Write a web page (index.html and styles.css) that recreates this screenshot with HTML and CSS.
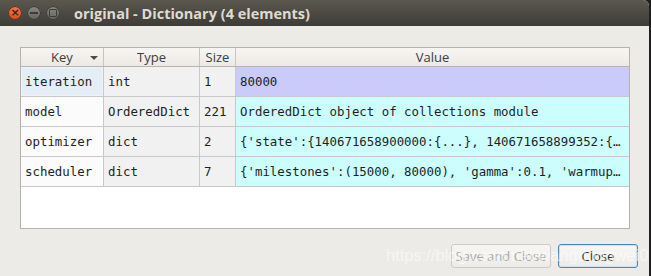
FILE: index.html
```
<!doctype html>
<html lang="en-US">
    <head>
        <meta charset="utf-8"/>
        <title>original - Dictionary (4 elements)</title>
        <link rel="stylesheet" href="styles.css">
    </head>
    <body>
        <div class="window">
            <div class="titlebar">
                <div class="controls">
                    <span class="btn close">&#215;</span>
                    <span class="btn minimize"><i class="bar"></i></span>
                    <span class="btn maximize"><i class="box"></i></span>
                </div>
                <div class="title">original - Dictionary (4 elements)</div>
            </div>
            <div class="content">
                <div class="grid">
                    <table>
                        <thead>
                            <tr>
                                <th class="col-key">Key<span class="sort"></span></th>
                                <th class="col-type">Type</th>
                                <th class="col-size">Size</th>
                                <th class="col-value">Value</th>
                            </tr>
                        </thead>
                        <tbody>
                            <tr>
                                <td class="key current">iteration</td>
                                <td class="type">int</td>
                                <td class="size">1</td>
                                <td class="value number">80000</td>
                            </tr>
                            <tr>
                                <td class="key">model</td>
                                <td class="type">OrderedDict</td>
                                <td class="size">221</td>
                                <td class="value">OrderedDict object of collections module</td>
                            </tr>
                            <tr>
                                <td class="key">optimizer</td>
                                <td class="type">dict</td>
                                <td class="size">2</td>
                                <td class="value">{'state':{140671658900000:{...}, 140671658899352:{&#8230;</td>
                            </tr>
                            <tr>
                                <td class="key">scheduler</td>
                                <td class="type">dict</td>
                                <td class="size">7</td>
                                <td class="value">{'milestones':(15000, 80000), 'gamma':0.1, 'warmup&#8230;</td>
                            </tr>
                        </tbody>
                    </table>
                </div>
                <div class="actions">
                    <button class="push" type="button" disabled>Save and Close</button>
                    <button class="push default" type="button">Close</button>
                </div>
            </div>
            <div class="watermark">https://blog.csdn.net/wangdongwei0</div>
        </div>
    </body>
</html>
```

FILE: styles.css
```
body {
    margin: 0;
    width: 651px;
    height: 276px;
    overflow: hidden;
    background-color: #1f1f1f;
}

.window {
    position: relative;
    width: 649px;
    height: 276px;
    background-color: #edebe7;
    border-top-right-radius: 6px;
    overflow: hidden;
}

.titlebar {
    height: 26px;
    display: flex;
    align-items: center;
    background: linear-gradient(#5a584e, #3d3c37);
}

.controls {
    display: flex;
    gap: 5px;
    margin-left: 8px;
}

.btn {
    width: 14px;
    height: 14px;
    border-radius: 50%;
    display: flex;
    align-items: center;
    justify-content: center;
    background: linear-gradient(#8a8a84, #64635e);
    box-shadow: inset 0 0 0 1px #3a3935;
}

.btn.close {
    background: linear-gradient(#f5764a, #df4b1e);
    color: #3b2216;
    font: bold 11px "DejaVu Sans", sans-serif;
    line-height: 14px;
}

.bar {
    width: 8px;
    height: 2px;
    background-color: #3d3c38;
}

.box {
    width: 6px;
    height: 6px;
    border: 1.5px solid #3d3c38;
    border-radius: 1px;
}

.title {
    margin-left: 14px;
    color: #dfdbd2;
    font: bold 14.5px "Open Sans", sans-serif;
}

.content {
    padding: 21px 20px 0 20px;
}

.grid {
    width: 608px;
    height: 180px;
    border: 1px solid #b5b1ab;
    background-color: #ffffff;
}

table {
    border-collapse: collapse;
    table-layout: fixed;
    width: 608px;
}

th {
    position: relative;
    height: 18px;
    padding: 0;
    border-right: 1px solid #c8c4bf;
    border-bottom: 1px solid #b8b4ae;
    background: linear-gradient(#f7f5f3, #ece9e5);
    color: #3c3c3c;
    font: normal 13px "Open Sans", sans-serif;
    text-align: center;
}

th.col-value {
    border-right: none;
}

.col-key {
    width: 82px;
}

.col-type {
    width: 95px;
}

.col-size {
    width: 35px;
}

.sort {
    position: absolute;
    right: 5px;
    top: 8px;
    border-left: 4px solid transparent;
    border-right: 4px solid transparent;
    border-top: 4px solid #4a4a4a;
}

td {
    height: 29px;
    padding: 0 0 0 4px;
    border-right: 1px solid #c8c8c8;
    border-bottom: 1px solid #c8c8c8;
    color: #1e1e1e;
    font: 12.4px "DejaVu Sans Mono", monospace;
    white-space: nowrap;
    overflow: hidden;
}

td.key {
    background-color: #fbfbfb;
}

td.key.current {
    background-color: #e4eef6;
    box-shadow: inset 0 0 0 1px #edf3f8;
}

td.type,
td.size {
    background-color: #f1f1f1;
}

td.value {
    background-color: #ccfefe;
    border-right: none;
}

td.value.number {
    background-color: #cbcbfb;
}

.actions {
    display: flex;
    justify-content: flex-end;
    gap: 7px;
    margin-top: 15px;
    margin-right: -9px;
}

.push {
    height: 24px;
    padding: 0;
    border: 1px solid #b9b6b1;
    border-radius: 3px;
    background: linear-gradient(#f7f6f5, #ecebe9);
    color: #2f2f2f;
    font: 13px "Open Sans", sans-serif;
    white-space: nowrap;
}

.push[disabled] {
    width: 100px;
    color: #a9a7a3;
    border-color: #cdcac5;
}

.push.default {
    width: 80px;
    border-color: #4a86b6;
    box-shadow: inset 0 0 0 1px #cfe1ee;
}

.watermark {
    position: absolute;
    left: 386px;
    top: 246px;
    color: rgba(255, 255, 255, 0.55);
    font: 16.5px "Liberation Sans", sans-serif;
    white-space: nowrap;
    pointer-events: none;
}
```
